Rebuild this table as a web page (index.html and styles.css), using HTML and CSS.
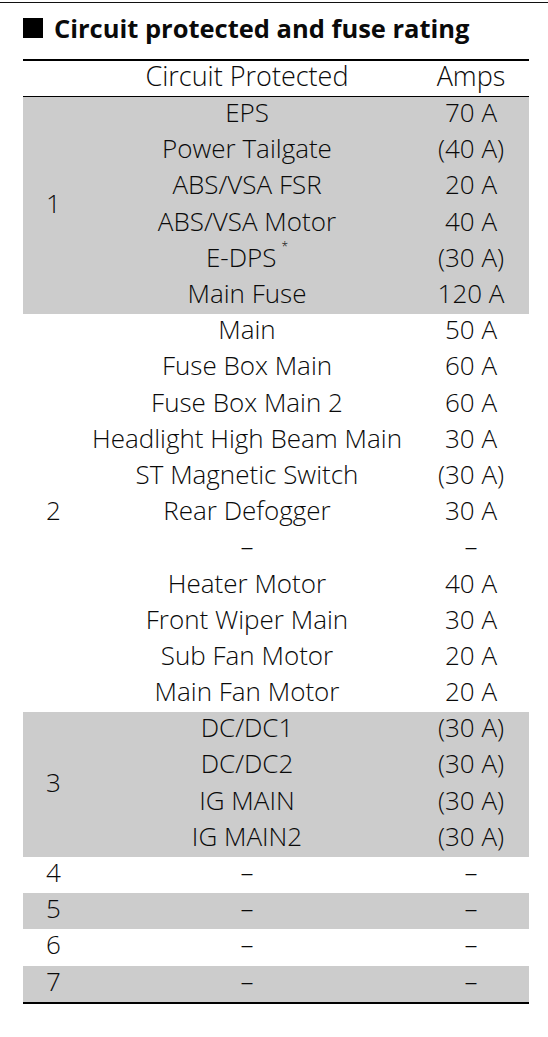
FILE: index.html
```html
<!DOCTYPE html>
<html>
<head>
<meta charset="utf-8">
<link rel="stylesheet" href="styles.css">
</head>
<body>
<div class="topline"></div>
<h1 class="title"><span class="sq"></span>Circuit protected and fuse rating</h1>
<table class="fuses">
  <colgroup><col class="c1"><col class="c2"><col class="c3"></colgroup>
  <thead>
    <tr><th></th><th>Circuit Protected</th><th>Amps</th></tr>
  </thead>
  <tbody>
    <tr class="g"><td class="num" rowspan="6">1</td><td>EPS</td><td>70 A</td></tr>
    <tr class="g"><td>Power Tailgate</td><td>(40 A)</td></tr>
    <tr class="g"><td>ABS/VSA FSR</td><td>20 A</td></tr>
    <tr class="g"><td>ABS/VSA Motor</td><td>40 A</td></tr>
    <tr class="g"><td>E-DPS<sup class="ast">*</sup></td><td>(30 A)</td></tr>
    <tr class="g"><td>Main Fuse</td><td>120 A</td></tr>
    <tr><td class="num" rowspan="11">2</td><td>Main</td><td>50 A</td></tr>
    <tr><td>Fuse Box Main</td><td>60 A</td></tr>
    <tr><td>Fuse Box Main 2</td><td>60 A</td></tr>
    <tr><td>Headlight High Beam Main</td><td>30 A</td></tr>
    <tr><td>ST Magnetic Switch</td><td>(30 A)</td></tr>
    <tr><td>Rear Defogger</td><td>30 A</td></tr>
    <tr><td>–</td><td>–</td></tr>
    <tr><td>Heater Motor</td><td>40 A</td></tr>
    <tr><td>Front Wiper Main</td><td>30 A</td></tr>
    <tr><td>Sub Fan Motor</td><td>20 A</td></tr>
    <tr><td>Main Fan Motor</td><td>20 A</td></tr>
    <tr class="g"><td class="num" rowspan="4">3</td><td>DC/DC1</td><td>(30 A)</td></tr>
    <tr class="g"><td>DC/DC2</td><td>(30 A)</td></tr>
    <tr class="g"><td>IG MAIN</td><td>(30 A)</td></tr>
    <tr class="g"><td>IG MAIN2</td><td>(30 A)</td></tr>
    <tr><td class="num">4</td><td>–</td><td>–</td></tr>
    <tr class="g"><td class="num">5</td><td>–</td><td>–</td></tr>
    <tr><td class="num">6</td><td>–</td><td>–</td></tr>
    <tr class="g"><td class="num">7</td><td>–</td><td>–</td></tr>
  </tbody>
</table>
</body>
</html>
```
FILE: styles.css
```css
html, body {
  margin: 0;
  padding: 0;
  background: #fff;
}
body {
  font-family: "Open Sans", "Noto Sans", sans-serif;
  color: #0a0a0a;
  width: 548px;
}
.topline {
  height: 1px;
  margin-top: 2px;
  background: #111;
}
.title {
  margin: 10px 0 0 23px;
  font-size: 25.5px;
  line-height: 30px;
  font-weight: 700;
  display: flex;
  align-items: center;
  gap: 11px;
}
.sq {
  display: inline-block;
  width: 20px;
  height: 20px;
  background: #000;
}
.fuses {
  margin: 16px 0 0 23px;
  width: 506px;
  table-layout: fixed;
  border-collapse: collapse;
  border-top: 2px solid #000;
  border-bottom: 2px solid #000;
  font-size: 26px;
  font-weight: 350;
}
.c1 { width: 58px; }
.c2 { width: 332px; }
.c3 { width: 116px; }
.fuses th {
  font-weight: 350;
  font-size: 27px;
  height: 29px;
  padding: 0 0 6px;
  border-bottom: 1px solid #000;
  text-align: center;
  white-space: nowrap;
  line-height: 1;
}
.fuses td {
  height: 30.2px;
  padding: 0 0 6px;
  text-align: center;
  white-space: nowrap;
  line-height: 1;
}
.fuses td.num {
  text-align: left;
  padding-left: 23px;
}
.fuses tr.g td {
  background: #cccccc;
}
.ast {
  font-size: 12px;
  vertical-align: top;
  position: relative;
  top: -3px;
  margin-left: 5px;
}
```
